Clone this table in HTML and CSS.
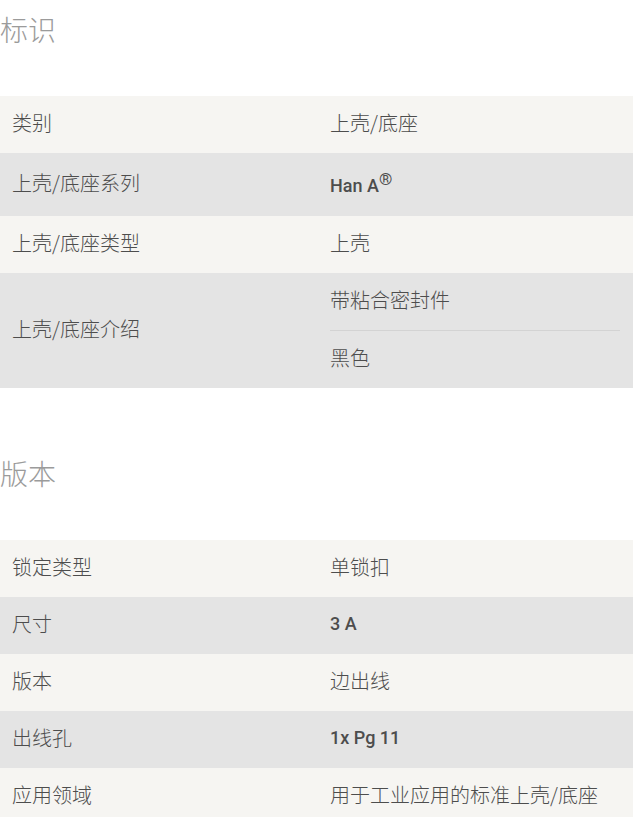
FILE: index.html
```html
<!DOCTYPE html>
<html lang="zh">
<head>
<meta charset="utf-8">
<title>标识 / 版本</title>
<link rel="stylesheet" href="styles.css">
</head>
<body>
<section class="section">
  <h2 class="section-title">标识</h2>
  <div class="spec-table">
    <div class="row row-light">
      <div class="cell cell-label">类别</div>
      <div class="cell cell-value">上壳/底座</div>
    </div>
    <div class="row row-dark">
      <div class="cell cell-label">上壳/底座系列</div>
      <div class="cell cell-value"><span class="latin">Han A<sup class="reg">®</sup></span></div>
    </div>
    <div class="row row-light">
      <div class="cell cell-label">上壳/底座类型</div>
      <div class="cell cell-value">上壳</div>
    </div>
    <div class="row row-dark">
      <div class="cell cell-label">上壳/底座介绍</div>
      <div class="cell cell-value cell-list">
        <div class="list-item">带粘合密封件</div>
        <div class="list-item">黑色</div>
      </div>
    </div>
  </div>
</section>

<section class="section">
  <h2 class="section-title">版本</h2>
  <div class="spec-table">
    <div class="row row-light">
      <div class="cell cell-label">锁定类型</div>
      <div class="cell cell-value">单锁扣</div>
    </div>
    <div class="row row-dark">
      <div class="cell cell-label">尺寸</div>
      <div class="cell cell-value"><span class="latin">3 A</span></div>
    </div>
    <div class="row row-light">
      <div class="cell cell-label">版本</div>
      <div class="cell cell-value">边出线</div>
    </div>
    <div class="row row-dark">
      <div class="cell cell-label">出线孔</div>
      <div class="cell cell-value"><span class="latin">1x Pg 11</span></div>
    </div>
    <div class="row row-light">
      <div class="cell cell-label">应用领域</div>
      <div class="cell cell-value">用于工业应用的标准上壳/底座</div>
    </div>
  </div>
</section>
</body>
</html>
```

FILE: styles.css
```css
html, body {
  margin: 0;
  padding: 0;
  background: #ffffff;
}

body {
  font-family: "Noto Sans CJK SC", "Liberation Sans", sans-serif;
  color: #4d4d4d;
}

.section {
  width: 633px;
  padding-top: 9px;
  margin-bottom: 56px;
}

.section-title {
  margin: 0 0 47px 0;
  font-size: 28px;
  line-height: 40px;
  font-weight: 300;
  color: #9b9b9b;
}

.spec-table {
  display: flex;
  flex-direction: column;
}

.row {
  display: grid;
  grid-template-columns: 317px 316px;
}

.row-light {
  background: #f6f5f2;
}

.row-dark {
  background: #e4e4e4;
}

.cell {
  display: flex;
  align-items: center;
  padding: 11px 12px 15px 12px;
  font-size: 20px;
  line-height: 31px;
  font-weight: 300;
}

.cell-value {
  padding-left: 13px;
  padding-right: 13px;
}

.cell-list {
  flex-direction: column;
  align-items: stretch;
  padding-top: 0;
  padding-bottom: 0;
}

.list-item {
  padding: 11px 0 15px 0;
}

.list-item + .list-item {
  border-top: 1px solid #d3d3d3;
}

.latin {
  font-family: Roboto, "Liberation Sans", Arial, sans-serif;
  font-size: 18px;
  font-weight: 500;
  color: #4d4d4d;
}

.reg {
  font-size: 17px;
  font-weight: 400;
  vertical-align: 7px;
}
```
